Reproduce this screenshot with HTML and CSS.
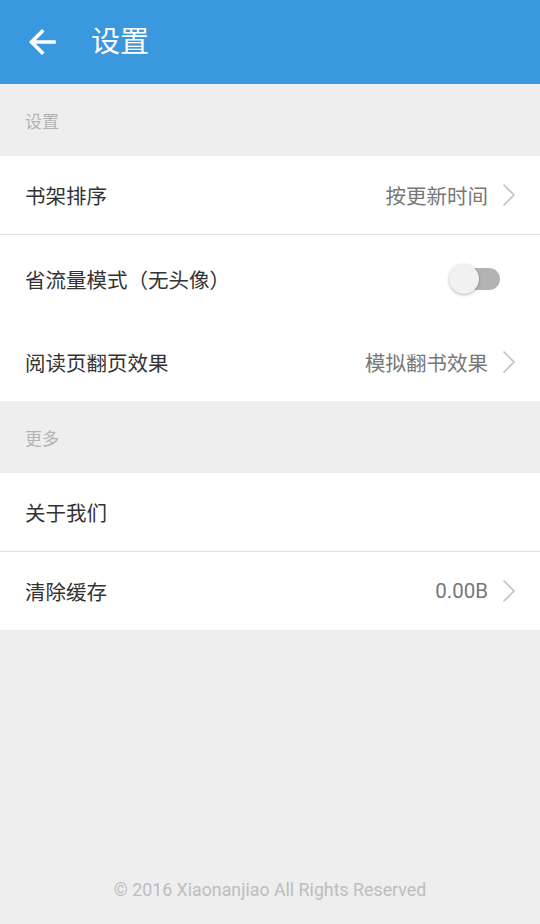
FILE: index.html
```html
<!DOCTYPE html>
<html lang="zh">
<head>
<meta charset="utf-8">
<title>设置</title>
<link rel="stylesheet" href="styles.css">
</head>
<body>
<div class="page">
  <header class="appbar">
    <svg class="back" viewBox="0 0 28 28" width="28" height="28">
      <path d="M26 14H4M14 3.5L3.5 14L14 24.5" fill="none" stroke="#fff" stroke-width="3.6" stroke-linecap="square" stroke-linejoin="miter"/>
    </svg>
    <h1 class="title">设置</h1>
  </header>

  <div class="section-label">设置</div>
  <div class="group">
    <div class="row divided">
      <span class="label">书架排序</span>
      <span class="value">按更新时间</span>
      <svg class="chev" viewBox="0 0 14 24" width="14" height="24"><path d="M1.5 1.5L12 12L1.5 22.5" fill="none" stroke="#c4c4c4" stroke-width="1.6"/></svg>
    </div>
    <div class="row toggle-row">
      <span class="label">省流量模式（无头像）</span>
      <span class="switch"><span class="track"></span><span class="thumb"></span></span>
    </div>
    <div class="row">
      <span class="label">阅读页翻页效果</span>
      <span class="value">模拟翻书效果</span>
      <svg class="chev" viewBox="0 0 14 24" width="14" height="24"><path d="M1.5 1.5L12 12L1.5 22.5" fill="none" stroke="#c4c4c4" stroke-width="1.6"/></svg>
    </div>
  </div>

  <div class="section-label">更多</div>
  <div class="group">
    <div class="row divided">
      <span class="label">关于我们</span>
    </div>
    <div class="row">
      <span class="label">清除缓存</span>
      <span class="value num">0.00B</span>
      <svg class="chev" viewBox="0 0 14 24" width="14" height="24"><path d="M1.5 1.5L12 12L1.5 22.5" fill="none" stroke="#c4c4c4" stroke-width="1.6"/></svg>
    </div>
  </div>

  <footer class="footer">© 2016 Xiaonanjiao All Rights Reserved</footer>
</div>
</body>
</html>
```
FILE: styles.css
```css
html, body {
  margin: 0;
  padding: 0;
}
body {
  background: #eeeeee;
  font-family: Roboto, "Noto Sans CJK SC", sans-serif;
}
.page {
  width: 540px;
  height: 924px;
  display: flex;
  flex-direction: column;
  background: #eeeeee;
}
.appbar {
  height: 84px;
  background: #3a98de;
  display: flex;
  align-items: center;
  padding-left: 28px;
  box-sizing: border-box;
}
.back {
  display: block;
}
.title {
  margin: 0 0 0 35px;
  font-size: 29px;
  font-weight: normal;
  color: #fff;
  line-height: 1;
}
.section-label {
  height: 72px;
  padding-left: 25px;
  display: flex;
  align-items: center;
  font-size: 17px;
  color: #b3b3b3;
  padding-top: 1px;
  box-sizing: border-box;
}
.group {
  background: #fff;
}
.row {
  height: 78px;
  display: flex;
  align-items: center;
  padding: 0 24px 0 25px;
  font-size: 20.5px;
  box-sizing: border-box;
}
.row.toggle-row {
  height: 88px;
}
.row.divided {
  border-bottom: 1.5px solid #e0e0e0;
  height: 79px;
}
.label {
  color: #333;
  flex: 1;
}
.value {
  color: #777;
  margin-right: 14px;
}
.chev {
  display: block;
}
.switch {
  position: relative;
  width: 52px;
  height: 32px;
  margin-right: 16px;
}
.track {
  position: absolute;
  left: 4px;
  right: 0;
  top: 5px;
  height: 22px;
  border-radius: 11px;
  background: #b3b3b3;
}
.thumb {
  position: absolute;
  left: 1px;
  top: 1px;
  width: 30px;
  height: 30px;
  border-radius: 50%;
  background: #f1f1f1;
  box-shadow: 0 1px 3px rgba(0,0,0,0.3);
}
.footer {
  margin-top: auto;
  height: 60px;
  text-align: center;
  font-size: 17.8px;
  color: #bdbdbd;
  padding-top: 15px;
  box-sizing: border-box;
}
```
